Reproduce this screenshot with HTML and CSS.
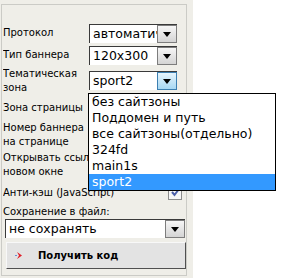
FILE: index.html
```html
<!DOCTYPE html>
<html lang="ru">
<head>
    <meta charset="UTF-8">
    <title>Получить код баннера</title>
    <link rel="stylesheet" href="styles.css">
</head>
<body>
    <div class="panel">
        <div class="frame">
            <div class="row r1">
                <div class="label">Протокол</div>
                <div class="combo"><div class="value">автоматически</div><div class="arrow"></div></div>
            </div>
            <div class="row r1">
                <div class="label">Тип баннера</div>
                <div class="combo"><div class="value">120x300</div><div class="arrow"></div></div>
            </div>
            <div class="row r2">
                <div class="label">Тематическая<br>зона</div>
                <div class="combo"><div class="value">sport2</div><div class="arrow hot"></div></div>
            </div>
            <div class="row r3">
                <div class="label">Зона страницы</div>
                <div class="combo"><div class="value"></div><div class="arrow"></div></div>
            </div>
            <div class="row r4">
                <div class="label">Номер баннера<br>на странице</div>
                <div class="combo"><div class="value"></div><div class="arrow"></div></div>
            </div>
            <div class="row r4">
                <div class="label">Открывать ссылки в<br>новом окне</div>
                <div class="spacer"></div>
                <div class="check"></div>
            </div>
            <div class="row r5">
                <div class="label wide">Анти-кэш (JavaScript)</div>
                <div class="check">
                    <svg width="11" height="11" viewBox="0 0 11 11"><path d="M2 5 L4.5 8 L9 2" fill="none" stroke="#4b5fa8" stroke-width="2"/></svg>
                </div>
            </div>
            <div class="row r6">
                <div class="label wide">Сохранение в файл:</div>
            </div>
            <div class="combo full"><div class="value">не сохранять</div><div class="arrow"></div></div>
            <div class="getcode">
                <svg class="icon" width="9" height="9" viewBox="0 0 9 9">
                    <path d="M2 1 L7 4.5 L2 8 L4 4.5 Z" fill="#e0202a"/>
                    <rect x="0" y="4" width="2" height="1" fill="#6a8fd8"/>
                </svg>
                <span>Получить код</span>
            </div>
        </div>
        <ul class="droplist">
            <li>без сайтзоны</li>
            <li>Поддомен и путь</li>
            <li>все сайтзоны(отдельно)</li>
            <li>324fd</li>
            <li>main1s</li>
            <li class="selected">sport2</li>
        </ul>
    </div>
</body>
</html>
```

FILE: styles.css
```css
body {
    margin: 0;
    background: #fff;
    font-family: "DejaVu Sans", Verdana, sans-serif;
    font-size: 10px;
    color: #000;
}
.panel {
    position: relative;
    width: 193px;
    height: 278px;
    background: #efeee8;
    padding-top: 4px;
    box-sizing: border-box;
}
.frame {
    margin-left: 1px;
    width: 186px;
    height: 272px;
    border: 1px solid #cbcbc6;
    box-sizing: border-box;
    padding: 17px 0 0 1px;
}
.row {
    display: flex;
    align-items: center;
}
.r1 { height: 22px; }
.r2 { height: 29px; }
.r3 { height: 25px; }
.r4 { height: 30px; }
.r5 { height: 25px; }
.r6 { height: 14px; }
.label {
    width: 86px;
    flex: none;
    line-height: 14px;
    white-space: nowrap;
    overflow: hidden;
}
.label.wide {
    width: auto;
    flex: 1;
}
.spacer {
    flex: 1;
}
.combo {
    display: flex;
    width: 88px;
    height: 19px;
    background: #fff;
    border-top: 1px solid #3a3a3a;
    border-left: 1px solid #3a3a3a;
    box-sizing: border-box;
}
.combo.full {
    width: 180px;
    margin-left: 2px;
}
.value {
    flex: 1;
    overflow: hidden;
    white-space: nowrap;
    font-size: 12.5px;
    line-height: 18px;
    padding-left: 3px;
}
.arrow {
    position: relative;
    width: 20px;
    flex: none;
    border: 1px solid #7d7d7d;
    box-sizing: border-box;
    background: linear-gradient(#f6f6f6, #d4d4d4);
}
.arrow::after {
    content: "";
    position: absolute;
    left: 5px;
    top: 6px;
    border-left: 4px solid transparent;
    border-right: 4px solid transparent;
    border-top: 5px solid #000;
}
.arrow.hot {
    border-color: #3c7fb1;
    background: linear-gradient(#e5f4fc, #a7d8f3);
}
.check {
    width: 14px;
    height: 14px;
    margin-right: 4px;
    border: 1px solid #8c8c8c;
    background: #f6f6f6;
    box-sizing: border-box;
    display: flex;
    align-items: center;
    justify-content: center;
}
.getcode {
    display: flex;
    align-items: center;
    width: 180px;
    height: 27px;
    margin: 4px 0 0 3px;
    background: #e3e3e3;
    border: 1px solid;
    border-color: #f8f8f8 #505050 #505050 #f8f8f8;
    box-sizing: border-box;
    font-weight: bold;
}
.getcode .icon {
    margin: 0 14px 0 8px;
}
.droplist {
    position: absolute;
    left: 88px;
    top: 93px;
    width: 188px;
    margin: 0;
    padding: 0;
    list-style: none;
    background: #fff;
    border: 1px solid #000;
    box-sizing: border-box;
    font-size: 12.5px;
}
.droplist li {
    height: 16px;
    line-height: 16px;
    padding-left: 3px;
    white-space: nowrap;
}
.droplist .selected {
    background: #3399ff;
    color: #fff;
}
```
